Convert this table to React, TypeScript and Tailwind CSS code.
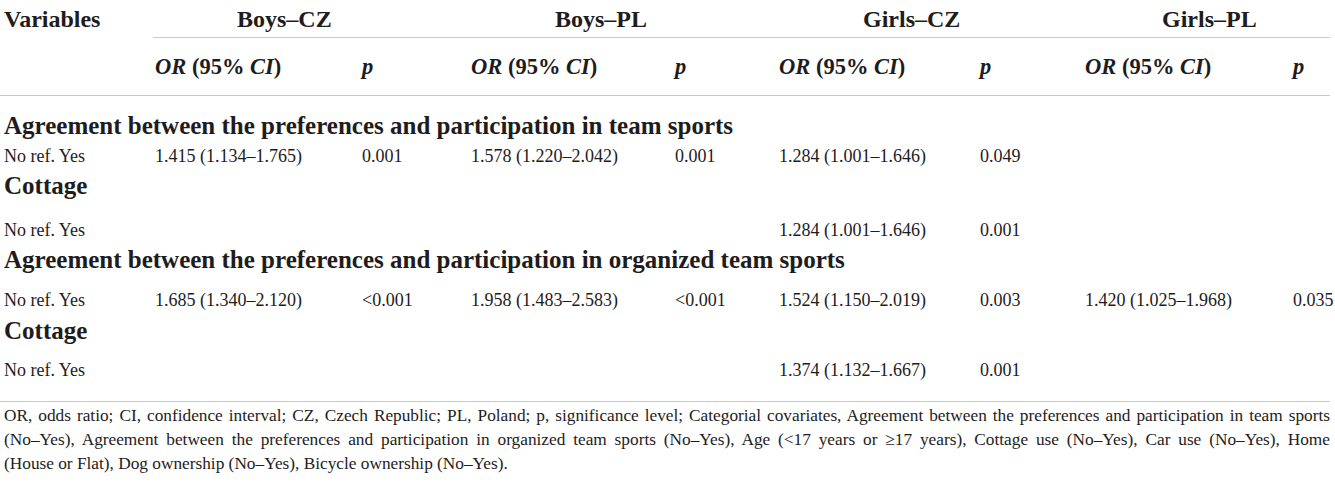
const cols = "grid grid-cols-[155px_207px_109px_204px_104px_201px_105px_208px_37px]";

const groups = [
  { label: "Boys–CZ", pad: "pl-[82px]" },
  { label: "Boys–PL", pad: "pl-[84px]" },
  { label: "Girls–CZ", pad: "pl-[84px]" },
  { label: "Girls–PL", pad: "pl-[77px]" },
];

type Row =
  | { kind: "head"; text: string; cls: string }
  | { kind: "data"; cells: string[]; cls: string };

const rows: Row[] = [
  { kind: "head", text: "Agreement between the preferences and participation in team sports", cls: "mt-[15px] h-[30px]" },
  { kind: "data", cells: ["1.415 (1.134–1.765)", "0.001", "1.578 (1.220–2.042)", "0.001", "1.284 (1.001–1.646)", "0.049", "", ""], cls: "h-[30px]" },
  { kind: "head", text: "Cottage", cls: "h-[30px]" },
  { kind: "data", cells: ["", "", "", "", "1.284 (1.001–1.646)", "0.001", "", ""], cls: "mt-[14px] h-[30px]" },
  { kind: "head", text: "Agreement between the preferences and participation in organized team sports", cls: "h-[30px]" },
  { kind: "data", cells: ["1.685 (1.340–2.120)", "<0.001", "1.958 (1.483–2.583)", "<0.001", "1.524 (1.150–2.019)", "0.003", "1.420 (1.025–1.968)", "0.035"], cls: "mt-[10px] h-[30px]" },
  { kind: "head", text: "Cottage", cls: "mt-px h-[30px]" },
  { kind: "data", cells: ["", "", "", "", "1.374 (1.132–1.667)", "0.001", "", ""], cls: "mt-[9px] h-[30px]" },
];

export default function App() {
  return (
    <div className="h-[486px] w-[1335px] overflow-hidden bg-white font-['Liberation_Serif',serif] text-[#1e1c1c]">
      <div className="w-[1330px]">
        {/* header */}
        <div className={`${cols} h-[37px] items-center`}>
          <div className="pl-[4px] text-[24px] font-bold">Variables</div>
          {groups.map((g) => (
            <div key={g.label} className={`col-span-2 text-[24px] font-bold ${g.pad}`}>
              {g.label}
            </div>
          ))}
        </div>
        <div className="ml-[153px] h-px bg-[#c8c8c8]" />
        <div className={`${cols} h-[57px] items-center`}>
          <div />
          {groups.map((g) => (
            <div key={g.label} className="contents">
              <div className="text-[22.5px] font-bold">
                <i>OR</i> (95% <i>CI</i>)
              </div>
              <div className="text-[22.5px] font-bold italic">p</div>
            </div>
          ))}
        </div>
        <div className="h-px bg-[#c8c8c8]" />

        {/* body */}
        {rows.map((r, i) =>
          r.kind === "head" ? (
            <div key={i} className={`flex items-center pl-[4px] text-[25px] font-bold ${r.cls}`}>
              {r.text}
            </div>
          ) : (
            <div key={i} className={`${cols} items-center text-[18px] ${r.cls}`}>
              <div className="pl-[4px]">No ref. Yes</div>
              {r.cells.map((c, j) => (
                <div key={j}>{c}</div>
              ))}
            </div>
          )
        )}
        <div className="mt-[16px] h-px bg-[#c8c8c8]" />

        {/* footnote */}
        <div className="mt-[2px] pl-[4px] text-[17.3px] leading-[24px]">
          <div className="text-justify [text-align-last:justify]">
            OR, odds ratio; CI, confidence interval; CZ, Czech Republic; PL, Poland; p, significance level; Categorial covariates, Agreement between the preferences and participation in team sports
          </div>
          <div className="text-justify [text-align-last:justify]">
            (No–Yes), Agreement between the preferences and participation in organized team sports (No–Yes), Age (&lt;17 years or ≥17 years), Cottage use (No–Yes), Car use (No–Yes), Home
          </div>
          <div>(House or Flat), Dog ownership (No–Yes), Bicycle ownership (No–Yes).</div>
        </div>
      </div>
    </div>
  );
}
